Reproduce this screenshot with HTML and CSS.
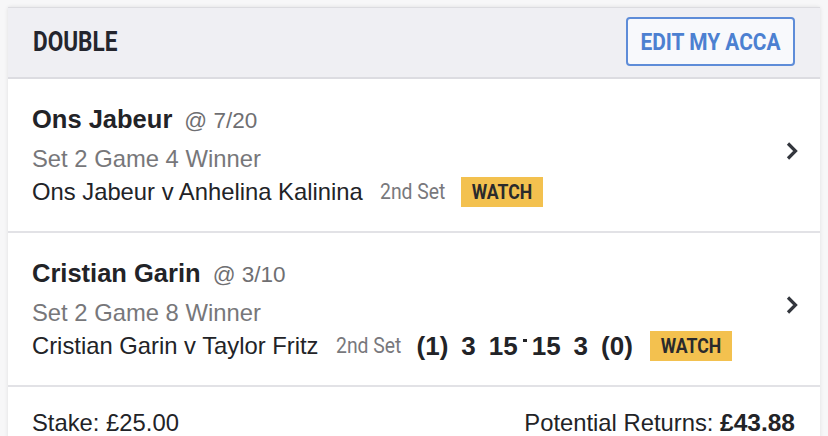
FILE: index.html
```
<!DOCTYPE html>
<html lang="en">
<head>
<meta charset="utf-8">
<title>Double</title>
<link rel="stylesheet" href="styles.css">
</head>
<body>
<div class="page">
  <section class="card">
    <header class="card-head">
      <h2 class="title"><span class="cond-t">DOUBLE</span></h2>
      <button class="edit-btn" type="button"><span class="cond-c">EDIT MY ACCA</span></button>
    </header>

    <div class="leg">
      <div class="leg-body">
        <div class="leg-sel"><span class="sel-name">Ons Jabeur</span><span class="sel-odds">@ 7/20</span></div>
        <div class="leg-market">Set 2 Game 4 Winner</div>
        <div class="leg-event">
          <span class="event-name">Ons Jabeur v Anhelina Kalinina</span>
          <span class="period"><span class="cond">2nd Set</span></span>
          <span class="watch"><span class="cond-w">WATCH</span></span>
        </div>
      </div>
      <svg class="chev" viewBox="0 0 14 20" width="14" height="20" aria-hidden="true"><path d="M3 2.5 L10.5 10 L3 17.5" fill="none" stroke="#33363d" stroke-width="3.2" stroke-linejoin="miter"/></svg>
    </div>

    <div class="leg">
      <div class="leg-body">
        <div class="leg-sel"><span class="sel-name">Cristian Garin</span><span class="sel-odds">@ 3/10</span></div>
        <div class="leg-market">Set 2 Game 8 Winner</div>
        <div class="leg-event">
          <span class="event-name">Cristian Garin v Taylor Fritz</span>
          <span class="period"><span class="cond">2nd Set</span></span>
          <span class="score">
            <span>(1)</span><span>3</span>
            <span class="pts"><span>15</span><span class="dash"></span><span>15</span></span>
            <span>3</span><span>(0)</span>
          </span>
          <span class="watch"><span class="cond-w">WATCH</span></span>
        </div>
      </div>
      <svg class="chev" viewBox="0 0 14 20" width="14" height="20" aria-hidden="true"><path d="M3 2.5 L10.5 10 L3 17.5" fill="none" stroke="#33363d" stroke-width="3.2" stroke-linejoin="miter"/></svg>
    </div>

    <footer class="summary">
      <span>Stake: £25.00</span>
      <span>Potential Returns: <b>£43.88</b></span>
    </footer>
  </section>
</div>
</body>
</html>
```

FILE: styles.css
```
* { box-sizing: border-box; }

html, body {
  margin: 0;
  padding: 0;
  background: #f7f7f8;
}

body {
  font-family: "Liberation Sans", Arial, sans-serif;
  color: #222327;
}

.page {
  padding: 7px 8px 0 8px;
}

.card {
  background: #ffffff;
  border-top: 1px solid #dcdce0;
  box-shadow: 0 0 4px rgba(0, 0, 0, 0.10);
  overflow: hidden;
}

.card-head {
  height: 71px;
  background: #efeff3;
  border-bottom: 2px solid #dcdce1;
  display: flex;
  align-items: center;
  justify-content: space-between;
  padding: 0 25px 2px 25px;
}

.title {
  margin: 0;
  font-family: Roboto, "Noto Sans", sans-serif;
  font-weight: 700;
  font-size: 27.5px;
  line-height: 30px;
  color: #24252d;
}

.cond-t {
  display: inline-block;
  white-space: nowrap;
  transform: scaleX(0.82);
  transform-origin: left center;
}

.cond {
  display: inline-block;
  white-space: nowrap;
  transform: scaleX(0.88);
  transform-origin: left center;
}

.cond-c {
  display: inline-block;
  white-space: nowrap;
  transform: scaleX(0.87);
  transform-origin: center center;
}

.cond-w {
  display: inline-block;
  white-space: nowrap;
  transform: scaleX(0.84);
  transform-origin: center center;
}

.edit-btn {
  width: 169px;
  height: 49px;
  border: 2px solid #5e8cd8;
  border-radius: 4px;
  background: #f8f9fc;
  color: #4c80d1;
  font-family: Roboto, "Noto Sans", sans-serif;
  font-weight: 700;
  font-size: 24px;
  line-height: 28px;
  display: flex;
  align-items: center;
  justify-content: center;
  padding: 0;
}

.leg {
  display: flex;
  align-items: center;
  padding: 25px 21px 24px 24px;
  border-bottom: 2px solid #e2e2e6;
}

.leg-body {
  flex: 1;
}

.chev {
  flex: none;
  margin-bottom: 10px;
}

.leg-sel {
  display: flex;
  align-items: baseline;
  height: 30px;
  line-height: 30px;
  white-space: nowrap;
}

.sel-name {
  font-weight: 700;
  font-size: 25.5px;
  color: #222327;
}

.sel-odds {
  margin-left: 12px;
  font-size: 22.5px;
  color: #6f6f72;
}

.leg-market {
  margin-top: 11px;
  font-size: 23.8px;
  line-height: 28px;
  color: #77777a;
}

.leg-event {
  margin-top: 4px;
  height: 30px;
  display: flex;
  align-items: center;
  gap: 17px;
  white-space: nowrap;
}

.event-name {
  font-size: 23.8px;
  line-height: 28px;
  color: #222327;
}

.period {
  width: 64px;
  font-family: Roboto, "Noto Sans", sans-serif;
  font-size: 22px;
  line-height: 28px;
  color: #78787c;
}

.watch {
  width: 82px;
  height: 30px;
  background: #f3c14f;
  color: #2a2a2c;
  font-family: Roboto, "Noto Sans", sans-serif;
  font-weight: 700;
  font-size: 21px;
  display: flex;
  align-items: center;
  justify-content: center;
}

.score {
  display: flex;
  align-items: center;
  gap: 13px;
  font-weight: 700;
  font-size: 26px;
  line-height: 30px;
  height: 30px;
  color: #222327;
}

.pts {
  display: flex;
  align-items: center;
  gap: 5px;
  height: 30px;
}

.dash {
  align-self: flex-start;
  margin-top: 8px;
  width: 4px;
  height: 3px;
  background: #222327;
}

.summary {
  display: flex;
  justify-content: space-between;
  padding: 22px 25px 20px 24px;
  font-size: 23.8px;
  line-height: 28px;
  color: #222327;
}

.summary b {
  font-weight: 700;
  font-size: 24.5px;
}
```
